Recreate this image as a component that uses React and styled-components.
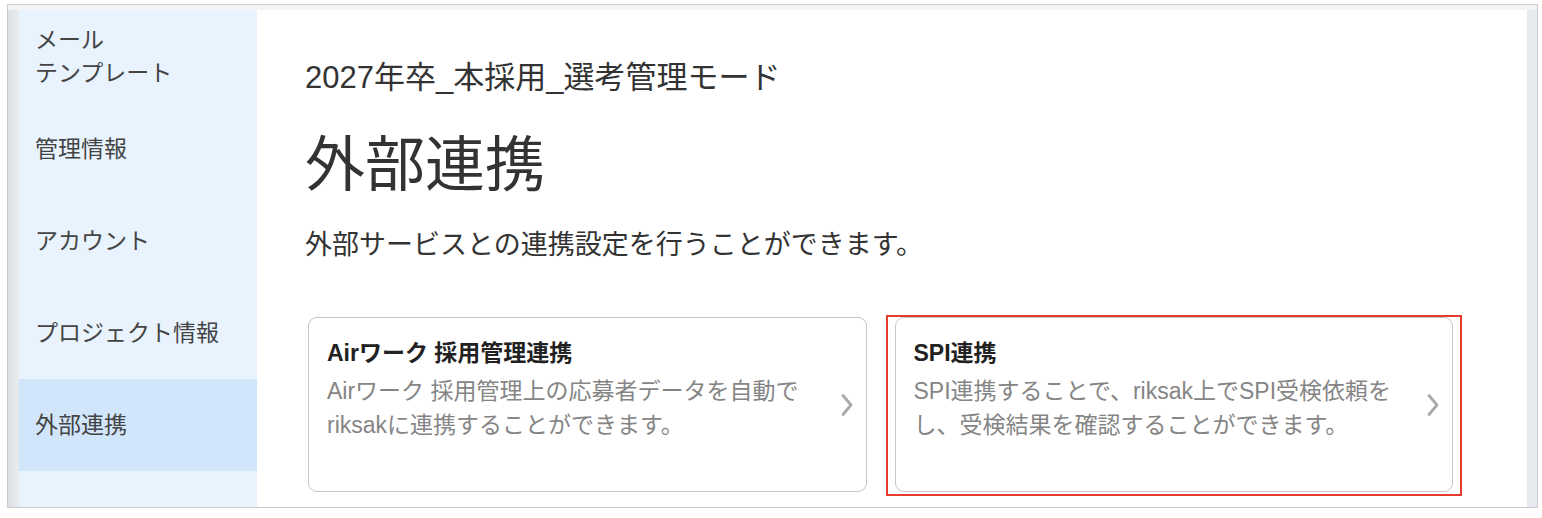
import React from 'react';
import styled, { createGlobalStyle } from 'styled-components';

const GlobalStyle = createGlobalStyle`
  html, body {
    margin: 0;
    padding: 0;
    background: #ffffff;
  }
  body {
    font-family: "Liberation Sans", "Noto Sans CJK JP", sans-serif;
    color: #333;
  }
`;

// Window frame with the thin shadow strip on the left and the scroll track on the right
const Frame = styled.div`
  margin: 4px 0 0 7px;
  width: 1529px;
  height: 497px;
  border: 1px solid #cbcbcb;
  background: #f2f4f6;
  display: flex;
  padding: 5px 0 0 0;
  box-sizing: content-box;
  overflow: hidden;
`;

const Shade = styled.div`
  width: 11px;
  flex-shrink: 0;
  background: linear-gradient(to right, #dde1e5, #e9ecef);
`;

const Track = styled.div`
  width: 10px;
  flex-shrink: 0;
  background: #e7eaee;
`;

const Layout = styled.div`
  flex: 1;
  display: flex;
  min-width: 0;
`;

const Sidebar = styled.nav`
  width: 238px;
  flex-shrink: 0;
  background: #e8f3fe;
  display: flex;
  flex-direction: column;
`;

const NavItem = styled.div`
  height: ${(p) => (p.$tall ? 93 : 92)}px;
  flex-shrink: 0;
  display: flex;
  align-items: center;
  padding: 0 16px;
  font-size: 23px;
  line-height: 33px;
  color: #444;
  background: ${(p) => (p.$active ? '#d2e6fb' : 'transparent')};
`;

const Main = styled.main`
  flex: 1;
  background: #fff;
  padding: 48px 0 0 48px;
`;

const Project = styled.div`
  font-size: 31px;
  line-height: 40px;
  color: #333;
`;

const Title = styled.h1`
  margin: 32px 0 0;
  font-size: 60px;
  line-height: 72px;
  font-weight: 400;
  color: #333;
`;

const Lead = styled.p`
  margin: 23px 0 0;
  font-size: 27px;
  line-height: 40px;
  color: #333;
`;

const Cards = styled.div`
  margin: 52px 0 0 3px;
  width: 1145px;
  display: grid;
  grid-template-columns: 1fr 1fr;
  column-gap: 28px;
`;

const Card = styled.div`
  position: relative;
  height: 175px;
  box-sizing: border-box;
  border: 1px solid #c6c6c6;
  border-radius: 9px;
  background: #fff;
  display: flex;
  align-items: center;
  padding: 0 12px 0 18px;

  ${(p) =>
    p.$highlighted &&
    `
    &::after {
      content: '';
      position: absolute;
      top: -3px;
      bottom: -5px;
      left: -10px;
      right: -10px;
      border: 2px solid #e33b2e;
      pointer-events: none;
    }
  `}
`;

const CardBody = styled.div`
  flex: 1;
  align-self: flex-start;
  padding-top: 19px;
`;

const CardTitle = styled.div`
  font-size: 23px;
  line-height: 32px;
  font-weight: 700;
  color: #222;
`;

const CardText = styled.div`
  margin-top: 5px;
  font-size: 23px;
  line-height: 34px;
  color: #858585;
  white-space: nowrap;
`;

const Chevron = () => (
  <svg width="14" height="26" viewBox="0 0 14 26" fill="none">
    <polyline
      points="3,3.5 11,13 3,22.5"
      stroke="#a9a9a9"
      strokeWidth="2.8"
      strokeLinecap="round"
      strokeLinejoin="round"
    />
  </svg>
);

const navItems = [
  { label: ['メール', 'テンプレート'] },
  { label: ['管理情報'] },
  { label: ['アカウント'] },
  { label: ['プロジェクト情報'] },
  { label: ['外部連携'], active: true },
];

const integrations = [
  {
    id: 'airwork',
    title: 'Airワーク 採用管理連携',
    lines: ['Airワーク 採用管理上の応募者データを自動で', 'riksakに連携することができます。'],
  },
  {
    id: 'spi',
    title: 'SPI連携',
    lines: ['SPI連携することで、riksak上でSPI受検依頼を', 'し、受検結果を確認することができます。'],
    highlighted: true,
  },
];

function App() {
  return (
    <>
      <GlobalStyle />
      <Frame>
        <Shade />
        <Layout>
          <Sidebar>
            {navItems.map((item, i) => (
              <NavItem key={i} $tall={i === 0} $active={item.active}>
                <div>
                  {item.label.map((l) => (
                    <div key={l}>{l}</div>
                  ))}
                </div>
              </NavItem>
            ))}
          </Sidebar>
          <Main>
            <Project>2027年卒_本採用_選考管理モード</Project>
            <Title>外部連携</Title>
            <Lead>外部サービスとの連携設定を行うことができます。</Lead>
            <Cards>
              {integrations.map((c) => (
                <Card key={c.id} $highlighted={c.highlighted}>
                  <CardBody>
                    <CardTitle>{c.title}</CardTitle>
                    <CardText>
                      {c.lines.map((l) => (
                        <div key={l}>{l}</div>
                      ))}
                    </CardText>
                  </CardBody>
                  <Chevron />
                </Card>
              ))}
            </Cards>
          </Main>
        </Layout>
        <Track />
      </Frame>
    </>
  );
}

export default App;
